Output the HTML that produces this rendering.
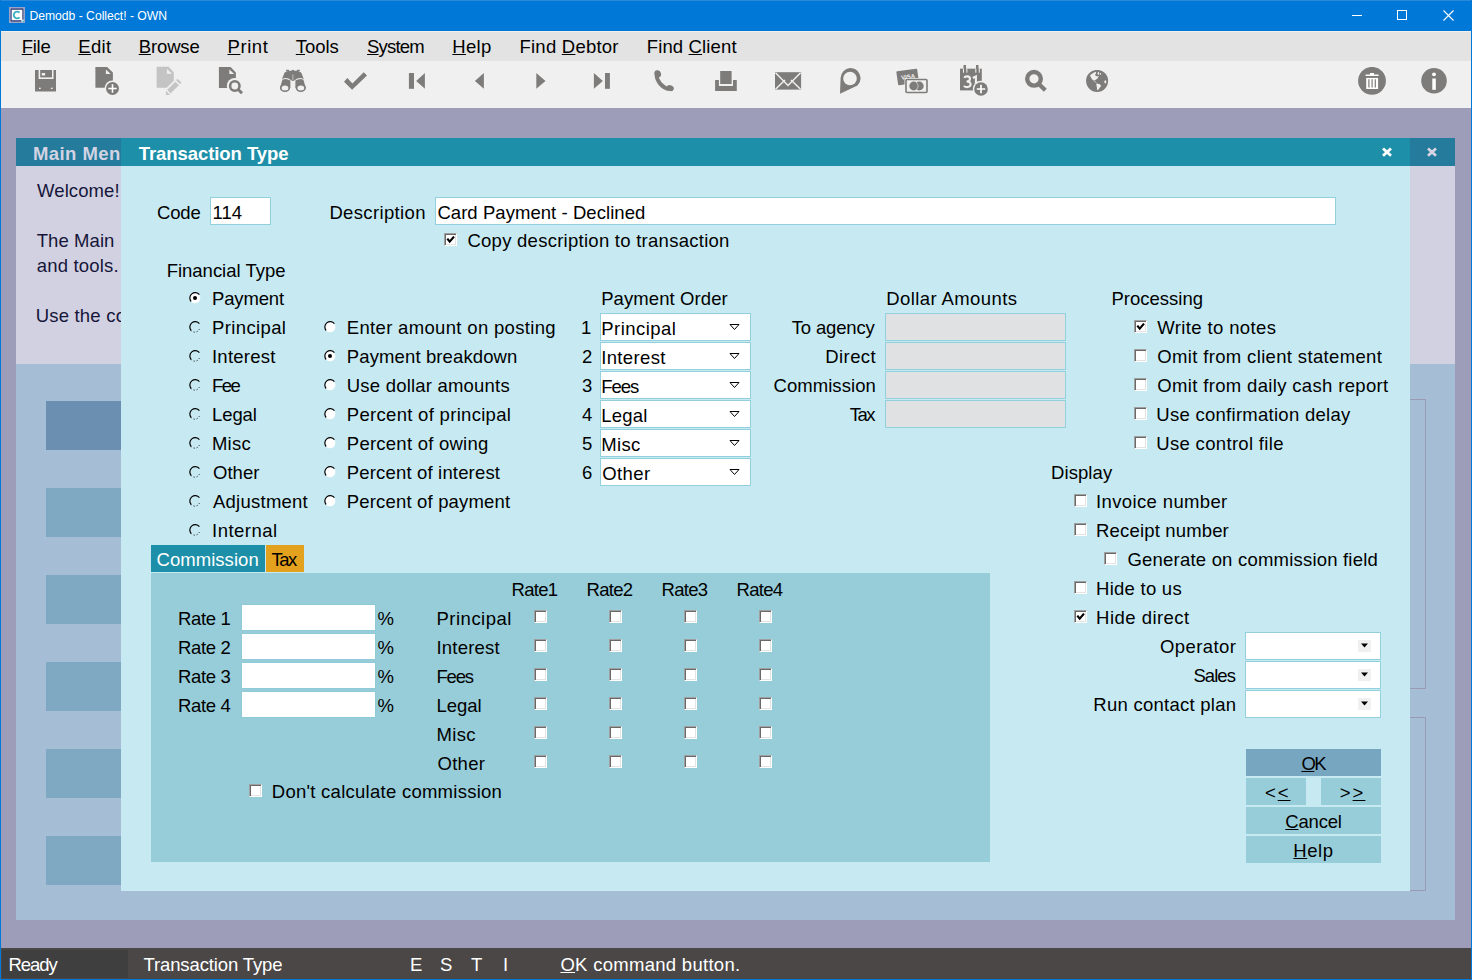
<!DOCTYPE html><html><head><meta charset="utf-8"><title>Transaction Type</title><style>
*{margin:0;padding:0;box-sizing:border-box}
html,body{width:1472px;height:980px;overflow:hidden;background:#9d9cb9;font-family:"Liberation Sans",sans-serif;font-size:18.5px;color:#000}
.t{position:absolute;white-space:pre;line-height:20px;letter-spacing:0.2px}
.r{position:absolute}
.cb{position:absolute;width:13px;height:13px;background:#fff;border:1px solid;border-color:#a0a0a0 #fff #fff #a0a0a0;box-shadow:inset 1px 1px 0 #696969, inset -1px -1px 0 #e3e3e3}
.rd{position:absolute}
u{text-decoration:underline;text-underline-offset:1px;text-decoration-thickness:1px}
svg{position:absolute}
</style></head><body><div class="r" style="left:0px;top:0px;width:1472px;height:31px;background:#0078d7;"></div>
<div class="r" style="left:0px;top:0px;width:1472px;height:1px;background:#2b88d8;"></div>
<div class="t" style="top:5.77px;left:29.40px;letter-spacing:-0.020px;color:#fff;font-size:12.2px;">Demodb - Collect! - OWN</div>
<svg style="left:9px;top:7px" width="17" height="17"><rect x="0.5" y="0.5" width="15" height="15" fill="#fff" stroke="#9aa3c8"/><path d="M14 12.8 V2 H2 V14 H12.5" fill="none" stroke="#2b3775" stroke-width="1.3"/><path d="M10.6 5.6 A3.4 3.4 0 1 0 10.6 10.4" stroke="#3ab0c0" stroke-width="1.9" fill="none"/><rect x="13.5" y="13.5" width="1.5" height="1.5" fill="#3ab0c0"/></svg>
<div class="r" style="left:1352px;top:15px;width:10px;height:1px;background:#fff;"></div>
<div class="r" style="left:1397px;top:10px;width:10px;height:10px;border:1px solid #fff"></div>
<svg style="left:1443px;top:10px" width="11" height="11"><path d="M0.5 0.5 L10.5 10.5 M10.5 0.5 L0.5 10.5" stroke="#fff" stroke-width="1.1"/></svg>
<div class="r" style="left:1px;top:31px;width:1470px;height:30px;background:#e3e3e3;"></div>
<div class="r" style="left:1px;top:31px;width:1470px;height:1px;background:#f0f0f0;"></div>
<div class="t" style="top:36.59px;left:21.70px;letter-spacing:-0.274px;"><u>F</u>ile</div>
<div class="t" style="top:36.59px;left:78.30px;letter-spacing:0.321px;"><u>E</u>dit</div>
<div class="t" style="top:36.59px;left:138.70px;letter-spacing:-0.120px;"><u>B</u>rowse</div>
<div class="t" style="top:36.59px;left:227.50px;letter-spacing:0.575px;"><u>P</u>rint</div>
<div class="t" style="top:36.59px;left:295.80px;letter-spacing:-0.034px;"><u>T</u>ools</div>
<div class="t" style="top:36.59px;left:367.10px;letter-spacing:-0.834px;"><u>S</u>ystem</div>
<div class="t" style="top:36.59px;left:452.30px;letter-spacing:0.314px;"><u>H</u>elp</div>
<div class="t" style="top:36.59px;left:519.50px;letter-spacing:0.231px;">Find <u>D</u>ebtor</div>
<div class="t" style="top:36.59px;left:646.70px;letter-spacing:0.151px;">Find <u>C</u>lient</div>
<div class="r" style="left:1px;top:61px;width:1470px;height:47px;background:#f0f0f0;"></div>
<div class="r" style="left:0px;top:0px;width:1px;height:980px;background:#0078d7;"></div>
<div class="r" style="left:1471px;top:0px;width:1px;height:980px;background:#0078d7;"></div>
<div class="r" style="left:0px;top:979px;width:1472px;height:1px;background:#0078d7;"></div>
<div class="r" style="left:16px;top:138px;width:1439px;height:28px;background:#247b9c;"></div>
<div class="t" style="top:143.59px;left:33.00px;letter-spacing:0.428px;color:#d3d3e3;font-weight:bold;">Main Menu</div>
<svg style="left:1426px;top:147px" width="12" height="10"><path d="M2 1.5 L10 8.8 M10 1.5 L2 8.8" stroke="#d8d4e4" stroke-width="2.8"/></svg>
<div class="r" style="left:16px;top:166px;width:1439px;height:198px;background:#d2d1e1;"></div>
<div class="r" style="left:16px;top:364px;width:1439px;height:556px;background:#a5bed5;"></div>
<div class="t" style="top:180.59px;left:37.00px;letter-spacing:0.105px;color:#16163a;">Welcome!</div>
<div class="t" style="top:230.59px;left:36.70px;letter-spacing:0.082px;color:#16163a;">The Main</div>
<div class="t" style="top:255.59px;left:36.70px;letter-spacing:0.180px;color:#16163a;">and tools.</div>
<div class="t" style="top:305.59px;left:35.70px;letter-spacing:0.200px;color:#16163a;">Use the co</div>
<div class="r" style="left:46px;top:401px;width:200px;height:49px;background:#6b8fb0;"></div>
<div class="r" style="left:46px;top:488px;width:200px;height:49px;background:#7fa8c3;"></div>
<div class="r" style="left:46px;top:575px;width:200px;height:49px;background:#7fa8c3;"></div>
<div class="r" style="left:46px;top:662px;width:200px;height:49px;background:#7fa8c3;"></div>
<div class="r" style="left:46px;top:749px;width:200px;height:49px;background:#7fa8c3;"></div>
<div class="r" style="left:46px;top:836px;width:200px;height:49px;background:#7fa8c3;"></div>
<div class="r" style="left:1300px;top:399px;width:126px;height:290px;border:1px solid #9a9ab2"></div>
<div class="r" style="left:1300px;top:717px;width:126px;height:174px;border:1px solid #9a9ab2"></div>
<div class="r" style="left:1px;top:948px;width:1470px;height:31px;background:#4b4746;"></div>
<div class="r" style="left:2px;top:950px;width:126px;height:28px;background:#3f3f3f;"></div>
<div class="t" style="top:954.59px;left:8.50px;letter-spacing:-1.082px;color:#fff;">Ready</div>
<div class="t" style="top:954.59px;left:143.50px;letter-spacing:-0.122px;color:#fff;">Transaction Type</div>
<div class="t" style="top:954.59px;left:410.00px;letter-spacing:0.200px;color:#fff;">E</div>
<div class="t" style="top:954.59px;left:440.00px;letter-spacing:0.200px;color:#fff;">S</div>
<div class="t" style="top:954.59px;left:471.00px;letter-spacing:0.200px;color:#fff;">T</div>
<div class="t" style="top:954.59px;left:503.00px;letter-spacing:0.200px;color:#fff;">I</div>
<div class="t" style="top:954.59px;left:560.40px;letter-spacing:0.290px;color:#fff;"><u>O</u>K command button.</div>
<div class="r" style="left:121px;top:138px;width:1289px;height:28px;background:#1d8fa8;"></div>
<div class="r" style="left:121px;top:166px;width:1289px;height:725px;background:#c7eaf2;"></div>
<div class="t" style="top:143.59px;left:138.75px;letter-spacing:-0.070px;color:#fff;font-weight:bold;">Transaction Type</div>
<svg style="left:1381px;top:147px" width="12" height="10"><path d="M2 1.5 L10 8.8 M10 1.5 L2 8.8" stroke="#fff" stroke-width="2.8"/></svg>
<div class="t" style="top:202.59px;left:157.00px;letter-spacing:-0.179px;">Code</div>
<div class="r" style="left:210px;top:197px;width:61px;height:28px;background:#fff;border:1px solid #93d0de"></div>
<div class="t" style="top:202.59px;left:212.50px;letter-spacing:-0.002px;">114</div>
<div class="t" style="top:202.59px;left:329.40px;letter-spacing:0.355px;">Description</div>
<div class="r" style="left:435px;top:197px;width:901px;height:28px;background:#fff;border:1px solid #93d0de"></div>
<div class="t" style="top:202.59px;left:437.40px;letter-spacing:0.055px;">Card Payment - Declined</div>
<div class="cb" style="left:444px;top:233px"><svg width="13" height="13" style="position:absolute;left:0;top:0"><path d="M2.3 4.6 L4.7 7.6 L9 2.6" stroke="#000" stroke-width="2.2" fill="none"/></svg></div>
<div class="t" style="top:230.59px;left:467.40px;letter-spacing:0.266px;">Copy description to transaction</div>
<div class="t" style="top:260.59px;left:166.70px;letter-spacing:-0.015px;">Financial Type</div>
<svg class="rd" style="left:189.3px;top:291.5px" width="12" height="12"><circle cx="6" cy="6" r="5.3" fill="#fff"/><path d="M2.1 9.5 A5 5 0 0 1 10.4 2.6" stroke="#000" stroke-width="1.2" fill="none"/><circle cx="6" cy="6" r="2" fill="#000"/></svg>
<div class="t" style="top:288.59px;left:212.00px;letter-spacing:-0.161px;">Payment</div>
<svg class="rd" style="left:189.3px;top:320.5px" width="12" height="12"><circle cx="6" cy="6" r="5.3" fill="none"/><path d="M2.1 9.5 A5 5 0 0 1 10.4 2.6" stroke="#000" stroke-width="1.2" fill="none"/><path d="M2.1 9.5 A5 5 0 0 0 10.4 8.1" stroke="#000" stroke-width="1" stroke-dasharray="1 2" fill="none"/></svg>
<div class="t" style="top:317.59px;left:212.00px;letter-spacing:0.370px;">Principal</div>
<svg class="rd" style="left:189.3px;top:349.5px" width="12" height="12"><circle cx="6" cy="6" r="5.3" fill="none"/><path d="M2.1 9.5 A5 5 0 0 1 10.4 2.6" stroke="#000" stroke-width="1.2" fill="none"/><path d="M2.1 9.5 A5 5 0 0 0 10.4 8.1" stroke="#000" stroke-width="1" stroke-dasharray="1 2" fill="none"/></svg>
<div class="t" style="top:346.59px;left:212.00px;letter-spacing:0.235px;">Interest</div>
<svg class="rd" style="left:189.3px;top:378.5px" width="12" height="12"><circle cx="6" cy="6" r="5.3" fill="none"/><path d="M2.1 9.5 A5 5 0 0 1 10.4 2.6" stroke="#000" stroke-width="1.2" fill="none"/><path d="M2.1 9.5 A5 5 0 0 0 10.4 8.1" stroke="#000" stroke-width="1" stroke-dasharray="1 2" fill="none"/></svg>
<div class="t" style="top:375.59px;left:212.00px;letter-spacing:-1.500px;">Fee</div>
<svg class="rd" style="left:189.3px;top:407.5px" width="12" height="12"><circle cx="6" cy="6" r="5.3" fill="none"/><path d="M2.1 9.5 A5 5 0 0 1 10.4 2.6" stroke="#000" stroke-width="1.2" fill="none"/><path d="M2.1 9.5 A5 5 0 0 0 10.4 8.1" stroke="#000" stroke-width="1" stroke-dasharray="1 2" fill="none"/></svg>
<div class="t" style="top:404.59px;left:212.00px;letter-spacing:-0.089px;">Legal</div>
<svg class="rd" style="left:189.3px;top:436.5px" width="12" height="12"><circle cx="6" cy="6" r="5.3" fill="none"/><path d="M2.1 9.5 A5 5 0 0 1 10.4 2.6" stroke="#000" stroke-width="1.2" fill="none"/><path d="M2.1 9.5 A5 5 0 0 0 10.4 8.1" stroke="#000" stroke-width="1" stroke-dasharray="1 2" fill="none"/></svg>
<div class="t" style="top:433.59px;left:212.00px;letter-spacing:0.210px;">Misc</div>
<svg class="rd" style="left:189.3px;top:465.5px" width="12" height="12"><circle cx="6" cy="6" r="5.3" fill="none"/><path d="M2.1 9.5 A5 5 0 0 1 10.4 2.6" stroke="#000" stroke-width="1.2" fill="none"/><path d="M2.1 9.5 A5 5 0 0 0 10.4 8.1" stroke="#000" stroke-width="1" stroke-dasharray="1 2" fill="none"/></svg>
<div class="t" style="top:462.59px;left:213.00px;letter-spacing:0.023px;">Other</div>
<svg class="rd" style="left:189.3px;top:494.5px" width="12" height="12"><circle cx="6" cy="6" r="5.3" fill="none"/><path d="M2.1 9.5 A5 5 0 0 1 10.4 2.6" stroke="#000" stroke-width="1.2" fill="none"/><path d="M2.1 9.5 A5 5 0 0 0 10.4 8.1" stroke="#000" stroke-width="1" stroke-dasharray="1 2" fill="none"/></svg>
<div class="t" style="top:491.59px;left:213.00px;letter-spacing:0.244px;">Adjustment</div>
<svg class="rd" style="left:189.3px;top:523.5px" width="12" height="12"><circle cx="6" cy="6" r="5.3" fill="none"/><path d="M2.1 9.5 A5 5 0 0 1 10.4 2.6" stroke="#000" stroke-width="1.2" fill="none"/><path d="M2.1 9.5 A5 5 0 0 0 10.4 8.1" stroke="#000" stroke-width="1" stroke-dasharray="1 2" fill="none"/></svg>
<div class="t" style="top:520.59px;left:212.00px;letter-spacing:0.486px;">Internal</div>
<svg class="rd" style="left:324.3px;top:320.5px" width="12" height="12"><circle cx="6" cy="6" r="5.3" fill="#fff"/><path d="M2.1 9.5 A5 5 0 0 1 10.4 2.6" stroke="#000" stroke-width="1.2" fill="none"/></svg>
<div class="t" style="top:317.59px;left:346.80px;letter-spacing:0.328px;">Enter amount on posting</div>
<svg class="rd" style="left:324.3px;top:349.5px" width="12" height="12"><circle cx="6" cy="6" r="5.3" fill="#fff"/><path d="M2.1 9.5 A5 5 0 0 1 10.4 2.6" stroke="#000" stroke-width="1.2" fill="none"/><circle cx="6" cy="6" r="2" fill="#000"/></svg>
<div class="t" style="top:346.59px;left:346.80px;letter-spacing:0.121px;">Payment breakdown</div>
<svg class="rd" style="left:324.3px;top:378.5px" width="12" height="12"><circle cx="6" cy="6" r="5.3" fill="#fff"/><path d="M2.1 9.5 A5 5 0 0 1 10.4 2.6" stroke="#000" stroke-width="1.2" fill="none"/></svg>
<div class="t" style="top:375.59px;left:346.80px;letter-spacing:0.204px;">Use dollar amounts</div>
<svg class="rd" style="left:324.3px;top:407.5px" width="12" height="12"><circle cx="6" cy="6" r="5.3" fill="#fff"/><path d="M2.1 9.5 A5 5 0 0 1 10.4 2.6" stroke="#000" stroke-width="1.2" fill="none"/></svg>
<div class="t" style="top:404.59px;left:346.80px;letter-spacing:0.303px;">Percent of principal</div>
<svg class="rd" style="left:324.3px;top:436.5px" width="12" height="12"><circle cx="6" cy="6" r="5.3" fill="#fff"/><path d="M2.1 9.5 A5 5 0 0 1 10.4 2.6" stroke="#000" stroke-width="1.2" fill="none"/></svg>
<div class="t" style="top:433.59px;left:346.80px;letter-spacing:0.246px;">Percent of owing</div>
<svg class="rd" style="left:324.3px;top:465.5px" width="12" height="12"><circle cx="6" cy="6" r="5.3" fill="#fff"/><path d="M2.1 9.5 A5 5 0 0 1 10.4 2.6" stroke="#000" stroke-width="1.2" fill="none"/></svg>
<div class="t" style="top:462.59px;left:346.80px;letter-spacing:0.167px;">Percent of interest</div>
<svg class="rd" style="left:324.3px;top:494.5px" width="12" height="12"><circle cx="6" cy="6" r="5.3" fill="#fff"/><path d="M2.1 9.5 A5 5 0 0 1 10.4 2.6" stroke="#000" stroke-width="1.2" fill="none"/></svg>
<div class="t" style="top:491.59px;left:346.80px;letter-spacing:0.172px;">Percent of payment</div>
<div class="t" style="top:288.59px;left:601.20px;letter-spacing:0.094px;">Payment Order</div>
<div class="t" style="top:317.59px;left:581.00px;letter-spacing:0.200px;">1</div>
<div class="r" style="left:600px;top:313px;width:151px;height:28px;background:#fff;border:1px solid #93d0de"></div>
<div class="t" style="top:318.59px;left:601.20px;letter-spacing:0.470px;">Principal</div>
<svg style="left:729px;top:324px" width="11" height="7"><path d="M1 0.5 L10 0.5 L5.5 5.5 Z" fill="#fff" stroke="#000" stroke-width="1"/></svg>
<div class="t" style="top:346.59px;left:582.00px;letter-spacing:0.200px;">2</div>
<div class="r" style="left:600px;top:342px;width:151px;height:28px;background:#fff;border:1px solid #93d0de"></div>
<div class="t" style="top:347.59px;left:601.20px;letter-spacing:0.363px;">Interest</div>
<svg style="left:729px;top:353px" width="11" height="7"><path d="M1 0.5 L10 0.5 L5.5 5.5 Z" fill="#fff" stroke="#000" stroke-width="1"/></svg>
<div class="t" style="top:375.59px;left:582.00px;letter-spacing:0.200px;">3</div>
<div class="r" style="left:600px;top:371px;width:151px;height:28px;background:#fff;border:1px solid #93d0de"></div>
<div class="t" style="top:376.59px;left:601.20px;letter-spacing:-1.059px;">Fees</div>
<svg style="left:729px;top:382px" width="11" height="7"><path d="M1 0.5 L10 0.5 L5.5 5.5 Z" fill="#fff" stroke="#000" stroke-width="1"/></svg>
<div class="t" style="top:404.59px;left:582.00px;letter-spacing:0.200px;">4</div>
<div class="r" style="left:600px;top:400px;width:151px;height:28px;background:#fff;border:1px solid #93d0de"></div>
<div class="t" style="top:405.59px;left:601.20px;letter-spacing:0.211px;">Legal</div>
<svg style="left:729px;top:411px" width="11" height="7"><path d="M1 0.5 L10 0.5 L5.5 5.5 Z" fill="#fff" stroke="#000" stroke-width="1"/></svg>
<div class="t" style="top:433.59px;left:582.00px;letter-spacing:0.200px;">5</div>
<div class="r" style="left:600px;top:429px;width:151px;height:28px;background:#fff;border:1px solid #93d0de"></div>
<div class="t" style="top:434.59px;left:601.20px;letter-spacing:0.343px;">Misc</div>
<svg style="left:729px;top:440px" width="11" height="7"><path d="M1 0.5 L10 0.5 L5.5 5.5 Z" fill="#fff" stroke="#000" stroke-width="1"/></svg>
<div class="t" style="top:462.59px;left:582.00px;letter-spacing:0.200px;">6</div>
<div class="r" style="left:600px;top:458px;width:151px;height:28px;background:#fff;border:1px solid #93d0de"></div>
<div class="t" style="top:463.59px;left:602.20px;letter-spacing:0.398px;">Other</div>
<svg style="left:729px;top:469px" width="11" height="7"><path d="M1 0.5 L10 0.5 L5.5 5.5 Z" fill="#fff" stroke="#000" stroke-width="1"/></svg>
<div class="t" style="top:288.59px;left:886.20px;letter-spacing:0.414px;">Dollar Amounts</div>
<div class="t" style="top:317.59px;left:791.80px;letter-spacing:-0.173px;">To agency</div>
<div class="r" style="left:885px;top:313px;width:181px;height:28px;background:#dfe1e2;border:1px solid #93d0de"></div>
<div class="t" style="top:346.59px;left:825.30px;letter-spacing:0.406px;">Direct</div>
<div class="r" style="left:885px;top:342px;width:181px;height:28px;background:#dfe1e2;border:1px solid #93d0de"></div>
<div class="t" style="top:375.59px;left:773.50px;letter-spacing:0.058px;">Commission</div>
<div class="r" style="left:885px;top:371px;width:181px;height:28px;background:#dfe1e2;border:1px solid #93d0de"></div>
<div class="t" style="top:404.59px;left:849.80px;letter-spacing:-1.500px;">Tax</div>
<div class="r" style="left:885px;top:400px;width:181px;height:28px;background:#dfe1e2;border:1px solid #93d0de"></div>
<div class="t" style="top:288.59px;left:1111.40px;letter-spacing:0.019px;">Processing</div>
<div class="cb" style="left:1134px;top:320px"><svg width="13" height="13" style="position:absolute;left:0;top:0"><path d="M2.3 4.6 L4.7 7.6 L9 2.6" stroke="#000" stroke-width="2.2" fill="none"/></svg></div>
<div class="t" style="top:317.59px;left:1157.30px;letter-spacing:0.374px;">Write to notes</div>
<div class="cb" style="left:1134px;top:349px"></div>
<div class="t" style="top:346.59px;left:1157.30px;letter-spacing:0.346px;">Omit from client statement</div>
<div class="cb" style="left:1134px;top:378px"></div>
<div class="t" style="top:375.59px;left:1157.30px;letter-spacing:0.338px;">Omit from daily cash report</div>
<div class="cb" style="left:1134px;top:407px"></div>
<div class="t" style="top:404.59px;left:1156.30px;letter-spacing:0.275px;">Use confirmation delay</div>
<div class="cb" style="left:1134px;top:436px"></div>
<div class="t" style="top:433.59px;left:1156.30px;letter-spacing:0.322px;">Use control file</div>
<div class="t" style="top:462.59px;left:1051.00px;letter-spacing:0.082px;">Display</div>
<div class="cb" style="left:1074px;top:494px"></div>
<div class="t" style="top:491.59px;left:1096.10px;letter-spacing:0.360px;">Invoice number</div>
<div class="cb" style="left:1074px;top:523px"></div>
<div class="t" style="top:520.59px;left:1096.10px;letter-spacing:0.159px;">Receipt number</div>
<div class="cb" style="left:1104px;top:552px"></div>
<div class="t" style="top:549.59px;left:1127.50px;letter-spacing:0.206px;">Generate on commission field</div>
<div class="cb" style="left:1074px;top:581px"></div>
<div class="t" style="top:578.59px;left:1096.10px;letter-spacing:0.251px;">Hide to us</div>
<div class="cb" style="left:1074px;top:610px"><svg width="13" height="13" style="position:absolute;left:0;top:0"><path d="M2.3 4.6 L4.7 7.6 L9 2.6" stroke="#000" stroke-width="2.2" fill="none"/></svg></div>
<div class="t" style="top:607.59px;left:1096.10px;letter-spacing:0.471px;">Hide direct</div>
<div class="t" style="top:636.59px;left:1160.00px;letter-spacing:0.408px;">Operator</div>
<div class="r" style="left:1245px;top:632px;width:136px;height:28px;background:#fff;border:1px solid #93d0de"></div>
<div class="r" style="left:1358px;top:640px;width:13px;height:12px;background:#f0f0f0;"></div>
<svg style="left:1361px;top:643px" width="8" height="6"><path d="M0 0.5 L7 0.5 L3.5 4.5 Z" fill="#000"/></svg>
<div class="t" style="top:665.59px;left:1193.40px;letter-spacing:-0.932px;">Sales</div>
<div class="r" style="left:1245px;top:661px;width:136px;height:28px;background:#fff;border:1px solid #93d0de"></div>
<div class="r" style="left:1358px;top:669px;width:13px;height:12px;background:#f0f0f0;"></div>
<svg style="left:1361px;top:672px" width="8" height="6"><path d="M0 0.5 L7 0.5 L3.5 4.5 Z" fill="#000"/></svg>
<div class="t" style="top:694.59px;left:1093.30px;letter-spacing:0.257px;">Run contact plan</div>
<div class="r" style="left:1245px;top:690px;width:136px;height:28px;background:#fff;border:1px solid #93d0de"></div>
<div class="r" style="left:1358px;top:698px;width:13px;height:12px;background:#f0f0f0;"></div>
<svg style="left:1361px;top:701px" width="8" height="6"><path d="M0 0.5 L7 0.5 L3.5 4.5 Z" fill="#000"/></svg>
<div class="r" style="left:1246px;top:749px;width:135px;height:27px;background:#77a6c0;"></div>
<div class="t" style="top:753.59px;left:1301.40px;letter-spacing:-1.500px;"><u>O</u>K</div>
<div class="r" style="left:1246px;top:778px;width:60px;height:27px;background:#97cdd9;"></div>
<div class="r" style="left:1321px;top:778px;width:60px;height:27px;background:#97cdd9;"></div>
<div class="t" style="top:782.59px;left:1264.90px;letter-spacing:2.000px;">&lt;<u>&lt;</u></div>
<div class="t" style="top:782.59px;left:1339.80px;letter-spacing:2.000px;">&gt;<u>&gt;</u></div>
<div class="r" style="left:1246px;top:807px;width:135px;height:27px;background:#97cdd9;"></div>
<div class="t" style="top:811.59px;left:1285.30px;letter-spacing:-0.195px;"><u>C</u>ancel</div>
<div class="r" style="left:1246px;top:836px;width:135px;height:27px;background:#97cdd9;"></div>
<div class="t" style="top:840.59px;left:1293.30px;letter-spacing:0.547px;"><u>H</u>elp</div>
<div class="r" style="left:151px;top:545px;width:114px;height:27px;background:#1d8fa8;"></div>
<div class="t" style="top:549.59px;left:156.50px;letter-spacing:0.047px;color:#fff;">Commission</div>
<div class="r" style="left:266px;top:545px;width:38px;height:27px;background:#e3a11e;"></div>
<div class="t" style="top:549.59px;left:271.40px;letter-spacing:-1.500px;">Tax</div>
<div class="r" style="left:151px;top:573px;width:839px;height:289px;background:#97cdd9;"></div>
<div class="t" style="top:579.59px;left:511.60px;letter-spacing:-0.744px;">Rate1</div>
<div class="t" style="top:579.59px;left:586.60px;letter-spacing:-0.744px;">Rate2</div>
<div class="t" style="top:579.59px;left:661.60px;letter-spacing:-0.744px;">Rate3</div>
<div class="t" style="top:579.59px;left:736.60px;letter-spacing:-0.744px;">Rate4</div>
<div class="t" style="top:608.59px;left:178.00px;letter-spacing:-0.324px;">Rate 1</div>
<div class="r" style="left:241px;top:604px;width:135px;height:27px;background:#fff;border:1px solid #8ecad7"></div>
<div class="t" style="top:608.59px;left:377.50px;letter-spacing:0.200px;">%</div>
<div class="t" style="top:637.59px;left:178.00px;letter-spacing:-0.324px;">Rate 2</div>
<div class="r" style="left:241px;top:633px;width:135px;height:27px;background:#fff;border:1px solid #8ecad7"></div>
<div class="t" style="top:637.59px;left:377.50px;letter-spacing:0.200px;">%</div>
<div class="t" style="top:666.59px;left:178.00px;letter-spacing:-0.324px;">Rate 3</div>
<div class="r" style="left:241px;top:662px;width:135px;height:27px;background:#fff;border:1px solid #8ecad7"></div>
<div class="t" style="top:666.59px;left:377.50px;letter-spacing:0.200px;">%</div>
<div class="t" style="top:695.59px;left:178.00px;letter-spacing:-0.324px;">Rate 4</div>
<div class="r" style="left:241px;top:691px;width:135px;height:27px;background:#fff;border:1px solid #8ecad7"></div>
<div class="t" style="top:695.59px;left:377.50px;letter-spacing:0.200px;">%</div>
<div class="t" style="top:608.59px;left:436.50px;letter-spacing:0.495px;">Principal</div>
<div class="cb" style="left:534px;top:610px"></div>
<div class="cb" style="left:609px;top:610px"></div>
<div class="cb" style="left:684px;top:610px"></div>
<div class="cb" style="left:759px;top:610px"></div>
<div class="t" style="top:637.59px;left:436.50px;letter-spacing:0.192px;">Interest</div>
<div class="cb" style="left:534px;top:639px"></div>
<div class="cb" style="left:609px;top:639px"></div>
<div class="cb" style="left:684px;top:639px"></div>
<div class="cb" style="left:759px;top:639px"></div>
<div class="t" style="top:666.59px;left:436.50px;letter-spacing:-1.193px;">Fees</div>
<div class="cb" style="left:534px;top:668px"></div>
<div class="cb" style="left:609px;top:668px"></div>
<div class="cb" style="left:684px;top:668px"></div>
<div class="cb" style="left:759px;top:668px"></div>
<div class="t" style="top:695.59px;left:436.50px;letter-spacing:-0.014px;">Legal</div>
<div class="cb" style="left:534px;top:697px"></div>
<div class="cb" style="left:609px;top:697px"></div>
<div class="cb" style="left:684px;top:697px"></div>
<div class="cb" style="left:759px;top:697px"></div>
<div class="t" style="top:724.59px;left:436.50px;letter-spacing:0.343px;">Misc</div>
<div class="cb" style="left:534px;top:726px"></div>
<div class="cb" style="left:609px;top:726px"></div>
<div class="cb" style="left:684px;top:726px"></div>
<div class="cb" style="left:759px;top:726px"></div>
<div class="t" style="top:753.59px;left:437.50px;letter-spacing:0.273px;">Other</div>
<div class="cb" style="left:534px;top:755px"></div>
<div class="cb" style="left:609px;top:755px"></div>
<div class="cb" style="left:684px;top:755px"></div>
<div class="cb" style="left:759px;top:755px"></div>
<div class="cb" style="left:249px;top:784px"></div>
<div class="t" style="top:781.59px;left:271.80px;letter-spacing:0.261px;">Don't calculate commission</div>
<svg style="left:35px;top:70px" width="22" height="22" viewBox="0 0 22 22"><path d="M0 0 H21 V21.5 H0 Z" fill="#7e7c7a"/><path d="M3.6 0 V9 H18.5 V0" fill="#f0f0f0"/><rect x="5.2" y="0" width="11.8" height="7.4" fill="#7e7c7a"/><rect x="6.8" y="3" width="3.3" height="2.5" fill="#f0f0f0"/><rect x="4" y="17.7" width="1.7" height="1.3" fill="#f0f0f0"/><rect x="15.9" y="17.7" width="1.7" height="1.3" fill="#f0f0f0"/></svg>
<svg style="left:95px;top:66px" width="26" height="30" viewBox="0 0 26 30"><path d="M0.4 1 H12.1 L17.9 6.4 V21.7 H0.4 Z" fill="#7e7c7a"/><path d="M10.9 3.5 V8 H15.7 Z" fill="#f0f0f0"/><circle cx="17.5" cy="22.5" r="8" fill="#f0f0f0"/><circle cx="17.5" cy="22.5" r="6.5" fill="#7e7c7a"/><path d="M17.5 18.3 V26.7 M13.3 22.5 H21.7" stroke="#fff" stroke-width="1.6"/></svg>
<svg style="left:150px;top:62px" width="40" height="38" viewBox="0 0 40 38"><path d="M6.6 4.8 H18.6 L23.8 10.3 V18.8 L16.7 25.8 H6.6 Z" fill="#c4c4c4"/><path d="M16.9 7 V11.8 H22.1 Z" fill="#f0f0f0"/><path d="M17.2 27.7 L25.4 19.8 L28.9 23.3 L20.5 31.4 Z" fill="#c4c4c4"/><path d="M26.5 18.3 L27.5 17.2 L31.1 20.6 L30.1 21.7 Z" fill="#c4c4c4" stroke="#c4c4c4" stroke-width="0.8"/><path d="M15.9 28.7 V32.9 H20 Z" fill="#c4c4c4"/></svg>
<svg style="left:218px;top:66px" width="28" height="30" viewBox="0 0 28 30"><path d="M0.9 1 H12.6 L17.9 6.4 V22 H0.9 Z" fill="#7e7c7a"/><path d="M11.4 3.5 V8 H16.2 Z" fill="#f0f0f0"/><circle cx="16.8" cy="20" r="8" fill="#f0f0f0"/><circle cx="16.8" cy="20" r="4.7" fill="none" stroke="#7e7c7a" stroke-width="2.6"/><path d="M20 23.3 L24 27.3" stroke="#7e7c7a" stroke-width="3"/></svg>
<svg style="left:275px;top:64px" width="36" height="32" viewBox="0 0 36 32"><path d="M6.9 15.2 L9.5 8.8 Q12 6.6 17.9 6.6 Q23.8 6.6 26.3 8.8 L28.9 15.2 Q24.8 12.2 19.2 16.4 L17.9 16.9 L16.6 16.4 Q11 12.2 6.9 15.2Z" fill="#7e7c7a"/><rect x="11" y="5.8" width="3" height="1.3" fill="#7e7c7a"/><rect x="21.8" y="5.8" width="3" height="1.3" fill="#7e7c7a"/><rect x="17" y="5.9" width="1.8" height="1.2" fill="#7e7c7a"/><path d="M17.9 10.5 V16" stroke="#c8c8c8" stroke-width="0.9"/><path d="M7.4 15.8 Q11 13.9 15.4 16.6 V23.9 H5 Z" fill="#7e7c7a"/><path d="M20.4 16.6 Q24.8 13.9 28.4 15.8 L30.8 23.9 H20.4 Z" fill="#7e7c7a"/><ellipse cx="10" cy="23.9" rx="5.1" ry="4" fill="#7e7c7a"/><ellipse cx="25.8" cy="23.9" rx="5.1" ry="4" fill="#7e7c7a"/><ellipse cx="10" cy="23.9" rx="3.4" ry="2.5" fill="#f0f0f0"/><ellipse cx="25.8" cy="23.9" rx="3.4" ry="2.5" fill="#f0f0f0"/></svg>
<svg style="left:340px;top:70px" width="30" height="22" viewBox="0 0 30 22"><path d="M4 11.7 L7.4 7.9 L12.4 13.4 L23.7 2.2 L27 5.5 L12.1 19.8 Z" fill="#7e7c7a"/></svg>
<svg style="left:408px;top:72px" width="18" height="18" viewBox="0 0 18 18"><rect x="0.9" y="1" width="5.1" height="15.8" fill="#7e7c7a"/><path d="M8.2 9 L16.9 1 V16.8Z" fill="#7e7c7a"/></svg>
<svg style="left:474px;top:72px" width="11" height="18" viewBox="0 0 11 18"><path d="M0.9 9 L9.9 1 V16.8Z" fill="#7e7c7a"/></svg>
<svg style="left:536px;top:72px" width="11" height="18" viewBox="0 0 11 18"><path d="M0.3 1 V16.8 L9.5 9Z" fill="#7e7c7a"/></svg>
<svg style="left:593px;top:72px" width="18" height="18" viewBox="0 0 18 18"><path d="M0.9 1 V16.8 L9.8 9Z" fill="#7e7c7a"/><rect x="12" y="1" width="4.9" height="15.8" fill="#7e7c7a"/></svg>
<svg style="left:653px;top:69px" width="23" height="24" viewBox="0 0 23 24"><path d="M3.6 6 C3.8 12.5 9.5 19 16.5 20.2" stroke="#7e7c7a" stroke-width="3.9" fill="none"/><ellipse cx="4.7" cy="4.9" rx="3.3" ry="3.7" transform="rotate(-15 4.7 4.9)" fill="#7e7c7a"/><ellipse cx="17.2" cy="19.2" rx="3.7" ry="2.8" transform="rotate(22 17.2 19.2)" fill="#7e7c7a"/></svg>
<svg style="left:715px;top:70px" width="23" height="22" viewBox="0 0 23 22"><rect x="5.2" y="1" width="11.4" height="13" fill="#7e7c7a"/><path d="M0.1 10 H3.9 V16 H18 V10 H21.8 V21 H0.1Z" fill="#7e7c7a"/></svg>
<svg style="left:775px;top:72px" width="27" height="18" viewBox="0 0 27 18"><rect x="0" y="0.2" width="26.1" height="17.4" fill="#7e7c7a"/><path d="M0.5 0.7 L13 13.5 L25.6 0.7 M0.5 17.2 L10 8 M25.6 17.2 L16 8" stroke="#f0f0f0" stroke-width="1.5" fill="none"/></svg>
<svg style="left:839px;top:67px" width="23" height="28" viewBox="0 0 23 28"><path d="M11 1 A10.3 10.3 0 0 1 18.5 18.5 L1 26.8 L1.6 11 A10.3 10.3 0 0 1 11 1Z" fill="#7e7c7a"/><circle cx="11" cy="11.5" r="6.8" fill="#f0f0f0"/></svg>
<svg style="left:896px;top:67px" width="33" height="28" viewBox="0 0 33 28"><g transform="rotate(-8 11 9)"><rect x="1" y="3" width="21" height="14" rx="1" fill="#7e7c7a"/><text x="5" y="12" font-size="6" font-weight="bold" fill="#f0f0f0" font-family="Liberation Sans">VISA</text></g><rect x="8.5" y="11" width="23" height="16" fill="#f0f0f0"/><rect x="10" y="12.5" width="21" height="13" rx="1" fill="none" stroke="#7e7c7a" stroke-width="1.6"/><circle cx="17.7" cy="19" r="4.4" fill="#7e7c7a"/><circle cx="23.3" cy="19" r="4.4" fill="#7e7c7a"/><path d="M20.5 15.6 A4.4 4.4 0 0 1 20.5 22.4" stroke="#f0f0f0" stroke-width="0.6" fill="none"/></svg>
<svg style="left:959px;top:65px" width="30" height="32" viewBox="0 0 30 32"><rect x="1" y="3.7" width="21.8" height="21.7" fill="#7e7c7a"/><rect x="4.5" y="0" width="2.5" height="7" fill="#7e7c7a"/><rect x="17" y="0" width="2.5" height="7" fill="#7e7c7a"/><rect x="4" y="3.7" width="1" height="4" fill="#f0f0f0"/><rect x="7.4" y="3.7" width="1" height="4" fill="#f0f0f0"/><rect x="16.3" y="3.7" width="1" height="4" fill="#f0f0f0"/><rect x="19.8" y="3.7" width="1" height="4" fill="#f0f0f0"/><path d="M5.3 12.8 C6 10.8 11 10.6 11 13.8 C11 16 8.8 16.4 7.6 16.5 C9.2 16.5 11.6 17 11.6 19.3 C11.6 22.6 6.2 22.8 4.9 20.8" stroke="#f0f0f0" stroke-width="2.1" fill="none"/><path d="M13.8 13 L16.9 11.4 V22.6" stroke="#f0f0f0" stroke-width="2.1" fill="none"/><circle cx="22" cy="24" r="8.2" fill="#f0f0f0"/><circle cx="22" cy="24" r="6.8" fill="#7e7c7a"/><path d="M22 19.8 V28.2 M17.8 24 H26.2" stroke="#fff" stroke-width="1.7"/></svg>
<svg style="left:1024px;top:69px" width="24" height="24" viewBox="0 0 24 24"><circle cx="10" cy="9.8" r="6.8" fill="none" stroke="#7e7c7a" stroke-width="4.4"/><path d="M14.8 15 L21.3 21.3" stroke="#7e7c7a" stroke-width="4.2"/></svg>
<svg style="left:1086px;top:70px" width="23" height="23" viewBox="0 0 23 23"><circle cx="11.1" cy="10.9" r="11" fill="#7e7c7a"/><path d="M4 5.2 L7.9 2.4 L10.2 1.7 L9.7 3.8 L9 5.2 L11.1 6.5 L12.9 5.8 L11.5 8.4 L9.7 9.7 L7.9 10.7 L6 9.3 L4.7 7 Z" fill="#f0f0f0"/><path d="M10.2 13.4 L13.4 13.9 L15.2 15.7 L12.5 19.4 L11.1 20.3 L10.9 17.5 L10.4 14.8 Z" fill="#f0f0f0"/><ellipse cx="19.3" cy="11.8" rx="1" ry="1.6" fill="#f0f0f0"/><ellipse cx="12.4" cy="3.4" rx="0.8" ry="1.4" fill="#f0f0f0"/><ellipse cx="14.5" cy="3.8" rx="0.7" ry="0.9" fill="#f0f0f0"/><path d="M8.6 11 L10 12.6" stroke="#f0f0f0" stroke-width="0.8"/></svg>
<svg style="left:1358px;top:67px" width="28" height="28" viewBox="0 0 28 28"><circle cx="14" cy="13.8" r="13.9" fill="#7e7c7a"/><path d="M7.6 7.5 H20.6 V9 H7.6Z M12 6 H16 V7.5 H12Z" fill="#fff"/><path d="M8.2 10.9 H20.1 V22 H8.2Z" fill="#fff"/><path d="M10.3 12.3 H11.5 V20.5 H10.3Z M13.5 12.3 H14.7 V20.5 H13.5Z M16.7 12.3 H17.9 V20.5 H16.7Z" fill="#7e7c7a"/></svg>
<svg style="left:1421px;top:68px" width="26" height="26" viewBox="0 0 26 26"><circle cx="13" cy="12.8" r="12.8" fill="#7e7c7a"/><circle cx="13" cy="6.3" r="1.9" fill="#fff"/><rect x="11.3" y="10.5" width="3.5" height="11.3" fill="#fff"/></svg></body></html>
